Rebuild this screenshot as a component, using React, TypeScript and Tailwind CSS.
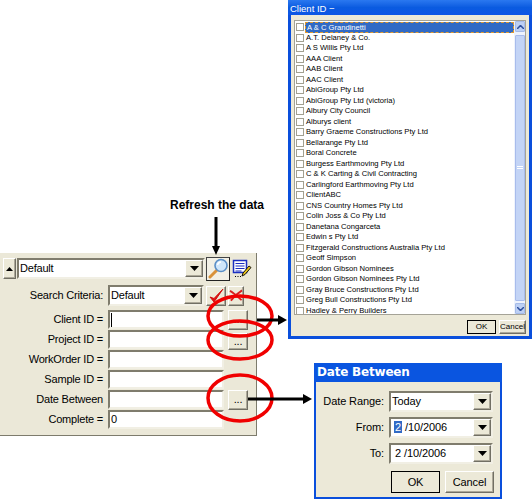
import React from 'react';

const font = "font-['Liberation_Sans',Arial,sans-serif]";
const sunken = 'border-2 border-t-[#7f7c6d] border-l-[#7f7c6d] border-r-[#f1efe4] border-b-[#f1efe4] bg-white';
const raised = 'border border-t-white border-l-white border-r-[#716f64] border-b-[#716f64] bg-[#ece9d8] shadow-[inset_-1px_-1px_0_#aca899]';

const DownArrow = () => (
  <svg width="9" height="5" viewBox="0 0 9 5"><path d="M0 0h9L4.5 5z" fill="#000" /></svg>
);

const Combo: React.FC<{ className?: string; children: React.ReactNode }> = ({ className, children }) => (
  <div className={`${sunken} flex items-center justify-between ${className}`}>
    <div className="pl-[1px] whitespace-nowrap">{children}</div>
    <div className={`${raised} flex items-center justify-center h-full w-[18px] shrink-0`}>
      <DownArrow />
    </div>
  </div>
);

const Dots: React.FC<{ className?: string }> = ({ className }) => (
  <div className={`${raised} flex items-center justify-center text-[11px] leading-none pb-[1px] w-5 ${className}`}>...</div>
);

const Magnifier = () => (
  <svg width="21" height="21" viewBox="0 0 21 21">
    <path d="M2 19l7-7" stroke="#d9923a" strokeWidth="3" strokeLinecap="round" />
    <circle cx="13" cy="7.500" r="6" fill="#cfe6fa" stroke="#5b8fc7" strokeWidth="1.600" />
    <path d="M9.500 7a4 4 0 0 1 3.500-3" stroke="#fff" strokeWidth="1.400" fill="none" />
  </svg>
);

const EditIcon = () => (
  <svg width="20" height="20" viewBox="0 0 20 20">
    <rect x="1.500" y="1.500" width="13" height="12" fill="#fff" stroke="#1a2fc0" strokeWidth="1.500" />
    <path d="M3.500 4.500h9M3.500 7h9M3.500 9.500h9M3.500 12h6" stroke="#1a2fc0" strokeWidth="1" />
    <path d="M10 17l1-3 6-7 2 1.500-6 7z" fill="#e8c21e" stroke="#000" strokeWidth="0.900" />
    <path d="M3 17.500h1M5.500 17.500h1M8 17.500h1" stroke="#000" strokeWidth="1" />
  </svg>
);

const CheckIcon = () => (
  <svg className="overflow-visible" width="17" height="17" viewBox="0 0 17 17">
    <path d="M2 10l4 5 9-13-9 9.500z" fill="#e01010" stroke="#d01010" strokeWidth="1" />
  </svg>
);

const CrossIcon = () => (
  <svg width="14" height="13" viewBox="0 0 15 13">
    <path d="M1 1.500c4 2 8 6 12.500 10M14 1C10 3.500 5 8 2 12" stroke="#d82020" strokeWidth="2" fill="none" />
  </svg>
);

const fields: { label: string; value?: string; caret?: boolean; button?: string }[] = [
  { label: 'Client ID =', caret: true, button: 'h-[20px]' },
  { label: 'Project ID =', button: 'h-[17px] mt-[3px]' },
  { label: 'WorkOrder ID =' },
  { label: 'Sample ID =' },
  { label: 'Date Between', button: 'h-[20px]' },
  { label: 'Complete =', value: '0' },
];

const SearchPanel = () => (
  <div className={`absolute left-0 top-[253px] w-[257px] h-[183px] bg-[#ebe8d8] border-r border-b border-[#7d7b6c] text-[11px] tracking-[-0.2px] text-black pt-[5px] ${font}`}>
    <div className="flex items-center h-[21px] pl-[3px]">
      <div className={`${raised} w-[13px] h-[21px] flex items-center justify-center`}>
        <svg width="7" height="4" viewBox="0 0 7 4"><path d="M0 4h7L3.500 0z" fill="#000" /></svg>
      </div>
      <Combo className="w-[188px] h-[21px] ml-[1px]">Default</Combo>
      <div className="ml-[1px] w-[24px] h-[24px] border border-t-[#444] border-l-[#444] border-r-[#222] border-b-[#222] bg-[#f2f0e6] flex items-center justify-center">
        <Magnifier />
      </div>
      <div className="ml-[1px] w-[22px] h-[22px] flex items-center justify-center">
        <EditIcon />
      </div>
    </div>
    <div className="flex items-center h-[21px] mt-[6px]">
      <div className="w-[103px] text-right shrink-0">Search Criteria:</div>
      <Combo className="w-[96px] h-[21px] ml-[5px]">Default</Combo>
      <div className={`${raised} w-5 h-5 ml-[2px] flex items-center justify-center`}><CheckIcon /></div>
      <div className={`${raised} w-[16px] h-5 ml-[2px] flex items-center justify-center`}><CrossIcon /></div>
    </div>
    <div className="flex flex-col mt-[4px]">
      {fields.map((f) => (
        <div key={f.label} className="flex h-5">
          <div className="w-[103px] text-right shrink-0 leading-[18px]">{f.label}</div>
          <div className={`${sunken} w-[116px] h-[19px] ml-[5px] leading-[15px] pl-[1px] flex items-center`}>
            {f.caret && <div className="w-px h-[14px] bg-black" />}
            {f.value}
          </div>
          {f.button && <Dots className={`ml-[4px] ${f.button}`} />}
        </div>
      ))}
    </div>
  </div>
);

const clients = [
  'A & C Grandinetti',
  'A.T. Delaney & Co.',
  'A S Willis Pty Ltd',
  'AAA Client',
  'AAB Client',
  'AAC Client',
  'AbiGroup Pty Ltd',
  'AbiGroup Pty Ltd (victoria)',
  'Albury City Council',
  'Alburys client',
  'Barry Graeme Constructions Pty Ltd',
  'Bellarange Pty Ltd',
  'Boral Concrete',
  'Burgess Earthmoving Pty Ltd',
  'C & K Carting & Civil Contracting',
  'Carlingford Earthmoving Pty Ltd',
  'ClientABC',
  'CNS Country Homes Pty Ltd',
  'Colin Joss & Co Pty Ltd',
  'Danetana Congarceta',
  'Edwin s Pty Ltd',
  'Fitzgerald Constructions Australia Pty Ltd',
  'Geoff Simpson',
  'Gordon Gibson Nominees',
  'Gordon Gibson Nominees Pty Ltd',
  'Gray Bruce Constructions Pty Ltd',
  'Greg Bull Constructions Pty Ltd',
  'Hadley & Perry Builders',
];

const ScrollBtn: React.FC<{ up?: boolean }> = ({ up }) => (
  <div className="h-[11px] w-[10px] rounded-[1px] bg-[#bdd0f4] border border-[#a5bbe8] flex items-center justify-center">
    <svg width="7" height="4" viewBox="0 0 7 4">
      <path d={up ? 'M0 4l3.500-3.500L7 4' : 'M0 0l3.500 3.500L7 0'} fill="none" stroke="#2d4f9e" strokeWidth="1.500" />
    </svg>
  </div>
);

const ClientWindow = () => (
  <div className={`absolute left-[288px] top-0 w-[244px] h-[339px] flex flex-col bg-[#ece9d8] border-x-[3px] border-b-[3px] border-[#0a4fdc] ${font}`}>
    <div className="h-[15px] shrink-0 bg-gradient-to-b from-[#2a78f0] via-[#0a5be0] to-[#0d55e6] text-white text-[9.500px] leading-[17px] whitespace-nowrap -mx-[3px] px-[2px]">
      Client ID −
    </div>
    <div className="h-[295px] mx-[3px] mt-[5px] border border-[#a5a397] bg-white flex text-[7.600px] text-black">
      <div className="flex-1 flex flex-col pt-[1px] overflow-hidden">
        {clients.map((c, i) => (
          <div key={c} className="flex items-center h-[10.500px] shrink-0">
            <div className="w-2 h-2 ml-[1px] border border-[#a2a091] bg-white shrink-0" />
            <div className={`ml-[1px] pl-[1px] flex-1 h-full leading-[9px] whitespace-nowrap ${i === 0 ? 'bg-[#316ac5] text-white border border-dashed border-[#e09a30]' : ''}`}>{c}</div>
          </div>
        ))}
      </div>
      <div className="w-[11px] shrink-0 bg-[#eef3fd] flex flex-col justify-between pl-[1px]">
        <ScrollBtn up />
        <div className="h-[266px] w-[10px] bg-[#c3d4f6] border border-[#a8bcec] rounded-[1px] flex items-center justify-center">
          <div className="w-[6px] h-[3px] border-y border-white" />
        </div>
        <ScrollBtn />
      </div>
    </div>
    <div className="flex justify-end gap-[3px] mt-[5px] pr-[3px] text-[8px]">
      <div className="w-[29px] h-[14px] border border-black bg-[#ece9d8] flex items-center justify-center">OK</div>
      <div className={`${raised} w-[27px] h-[14px] flex items-center justify-center`}>Cancel</div>
    </div>
  </div>
);

const DateWindow = () => (
  <div className={`absolute left-[314px] top-[363px] w-[188px] h-[136px] flex flex-col bg-[#ece9d8] border-x-[2px] border-b-[2px] border-[#0a4fdc] text-[11px] tracking-[-0.1px] text-black ${font}`}>
    <div className="h-[19px] shrink-0 -mx-[2px] px-[3px] bg-[#0a55e0] text-white text-[12px] font-bold leading-[19px] font-['DejaVu_Sans',sans-serif] tracking-[-0.2px]">
      Date Between
    </div>
    <div className="flex items-center h-[21px] mt-[9px]">
      <div className="w-[68px] text-right shrink-0">Date Range:</div>
      <Combo className="w-[104px] h-[21px] ml-[5px]">Today</Combo>
    </div>
    <div className="flex items-center h-[21px] mt-[5px]">
      <div className="w-[68px] text-right shrink-0">From:</div>
      <Combo className="w-[104px] h-[21px] ml-[5px]">
        <span className="ml-[2px] bg-[#316ac5] text-white px-[1px]">2</span> /10/2006
      </Combo>
    </div>
    <div className="flex items-center h-[21px] mt-[5px]">
      <div className="w-[68px] text-right shrink-0">To:</div>
      <Combo className="w-[104px] h-[21px] ml-[5px]"><span className="ml-[3px]">2 /10/2006</span></Combo>
    </div>
    <div className="flex justify-end gap-[5px] mt-[7px] pr-[6px]">
      <div className="w-[49px] h-[22px] border border-black bg-[#ece9d8] flex items-center justify-center">OK</div>
      <div className={`${raised} w-[49px] h-[22px] flex items-center justify-center`}>Cancel</div>
    </div>
  </div>
);

const Annotations = () => (
  <svg className="absolute left-0 top-0 pointer-events-none" width="532" height="499" viewBox="0 0 532 499">
    <g fill="none" stroke="#f00000" strokeWidth="3.500">
      <ellipse cx="240" cy="316" rx="32" ry="20" />
      <ellipse cx="240" cy="340" rx="32" ry="19" />
      <ellipse cx="240" cy="398" rx="32" ry="23" />
    </g>
    <path d="M216 217v30" stroke="#000" strokeWidth="3" />
    <path d="M212 246h8l-4 9z" fill="#000" />
    <path d="M257 320h22" stroke="#000" strokeWidth="3" />
    <path d="M278 315v10l9-5z" fill="#000" />
    <path d="M248 399h56" stroke="#000" strokeWidth="3" />
    <path d="M303 394v10l9-5z" fill="#000" />
  </svg>
);

export default function App() {
  return (
    <div className="relative w-[532px] h-[499px] bg-white overflow-hidden">
      <SearchPanel />
      <ClientWindow />
      <DateWindow />
      <div className={`absolute left-[170px] top-[198px] text-[12px] font-bold text-black whitespace-nowrap leading-[14px] ${font}`}>
        Refresh the data
      </div>
      <Annotations />
    </div>
  );
}
